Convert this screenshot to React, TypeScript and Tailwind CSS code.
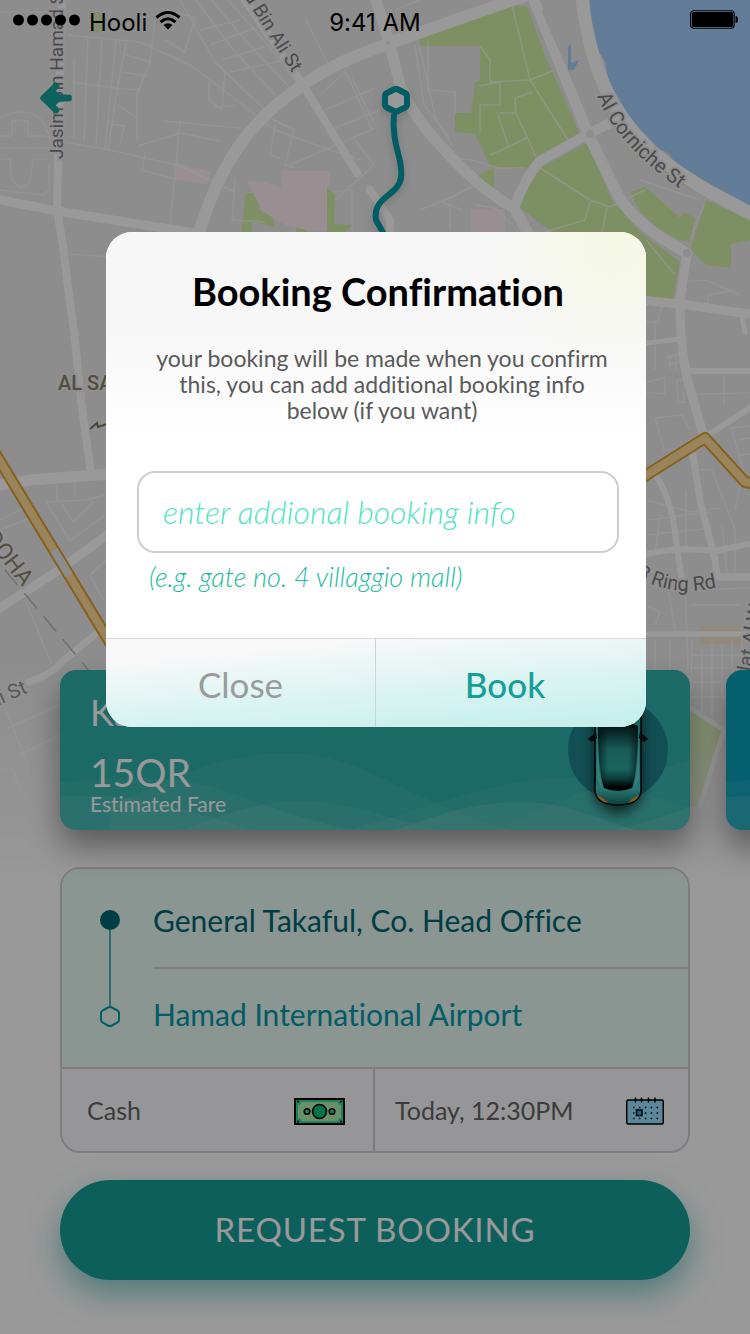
import React from "react";

const thinStreets = [
  "M0 12 H70", "M0 148 H50", "M12 136 V121 H28 V136 H45 M0 136 H12",
  "M0 159 H10 L12 180 L21 188 L30 182 L33 159 H48",
  "M0 118 Q20 108 36 115 Q46 122 50 140", "M0 190 L43 195 L49 190 V165",
  "M68 35 L140 42 L190 65 L230 95 L275 130 L330 150 L362 160",
  "M72 82 L115 88 L140 90", "M74 60 V140", "M88 36 L84 142", "M102 38 L96 146", "M116 40 L105 150",
  "M126 44 L118 84 L108 150", "M155 20 L150 62 L137 95 V140", "M126 55 L150 62 M122 72 L147 76 M118 105 L136 117",
  "M65 142 L110 150 L180 166 L235 192", "M110 124 L124 126 L120 145", "M138 146 L180 133 L220 141",
  "M180 120 L176 165 L170 226", "M163 121 L240 128", "M145 155 L142 170 L178 180", "M235 178 L232 220 L265 222",
  "M165 40 L185 52 L195 18 L160 8", "M180 0 L215 62 L265 110", "M196 0 L232 48 L275 95", "M212 0 L245 40 L290 88",
  "M228 0 L262 38 L298 84", "M200 30 L240 20 M210 45 L255 28 M222 60 L270 45 M230 72 L285 60",
  "M209 82 V100 L222 110 L225 70 M215 107 L235 106", "M270 118 L294 130 L285 165 L295 168",
  "M275 125 L270 155 L280 158", "M306 20 L328 64", "M345 70 L372 130", "M352 78 L375 125",
  "M325 110 L375 88 M335 128 L380 110 M320 95 L345 72", "M290 165 L375 128", "M333 192 L352 190 V230",
  "M355 140 L374 165 L335 200", "M70 254 L110 257", "M57 485 V500 M75 480 V497",
  "M46 502 L86 500 L106 495 M46 502 L70 541 L106 514 M62 504 L73 522 L94 502",
  "M0 520 L30 505 M0 530 L38 515", "M106 560 L90 575 L106 605", "M25 600 L52 665",
  "M0 695 L28 765 M8 728 L60 705 M20 755 L60 735", "M0 770 L12 768 L20 790",
  "M512 5 L530 80 L568 140", "M428 40 V90 L455 92 V115", "M415 45 L424 105 L450 138", "M420 48 L436 120 L452 145",
  "M480 46 L490 60 V82 L530 80 L555 70", "M479 86 L500 82 V105 H480 V133", "M500 113 H516 L515 98 L533 92",
  "M498 115 L508 145 M490 155 L527 138 M516 113 L536 157", "M455 158 L472 160 L498 168 H525",
  "M420 210 L450 198 L475 185 M450 204 V230 M442 202 L462 210", "M475 205 L495 208 L512 225",
  "M540 168 L590 200 L610 207 L645 190 M590 202 L585 220 L545 232", "M607 207 L602 232",
  "M465 0 L520 -5 M395 10 L420 0", "M640 180 L700 200 M704 205 L690 240", "M646 240 L675 275",
  "M682 282 L706 280 L740 295 M708 305 V295 L735 290", "M646 322 L658 322 L662 305 M655 320 V370",
  "M646 382 L665 378 V394 L646 392", "M666 357 L680 355 M668 364 L682 362 M670 355 V370 M676 353 V372",
  "M677 380 H684 V402 H678 Z", "M724 375 V406 M700 394 L750 393", "M655 418 L682 415 L690 430 M655 418 L664 450 L695 445",
  "M732 430 L743 470 L735 510 M730 428 L750 426 M738 440 L750 438 M740 455 L750 454",
  "M646 500 L690 512 L720 508 M648 520 L710 512 M646 535 L712 528", "M660 515 L655 555 M686 490 V550",
  "M700 470 H712 L735 530 V580", "M722 525 L728 580 M646 570 L666 575 L675 630",
  "M655 585 L675 590 M646 605 L660 612 L655 625 M685 575 L688 670", "M690 590 L750 588 M690 605 H740",
  "M655 640 V670 M670 640 V670 M692 640 L690 720", "M702 650 V715 M712 645 V720 M722 645 V705 M732 640 V700 M742 640 V720",
  "M690 655 H745 M690 668 H745 M690 682 H740 M690 697 H735 M694 710 L724 732",
];

const roads: [string, number][] = [
  ["M62 0 L58 155 L57 210 L62 240 L75 340 L81 400 L91 474", 8],
  ["M0 200 L57 211 L150 226 L200 234", 9],
  ["M245 0 L303 85 L357 173", 8],
  ["M530 -6 L390 43 C350 58 330 66 303 85 C250 120 218 165 197 240", 12],
  ["M376 0 L390 45 L400 85 Q412 115 440 145 Q480 190 514 208 L532 240", 11],
  ["M534 0 L588 134 L618 195 Q635 225 687 253", 11],
  ["M582 0 C590 60 605 105 650 150 C685 180 715 195 752 214", 13],
  ["M612 122 L588 134 L540 161 Q525 178 514 208", 10],
  ["M370 190 L390 220 V240", 8],
  ["M640 300 L680 304 L750 314", 9],
  ["M687 253 L680 300 Q680 360 692 395 L703 434", 9],
  ["M646 343 L680 339", 5], ["M690 371 H750", 6], ["M742 316 L745 332", 5], ["M705 437 L750 408", 6],
  ["M693 455 L700 500 L715 560 L717 577 H750", 7],
  ["M656 476 Q672 500 676 540 L682 582", 6],
  ["M640 556 Q670 546 715 551 L750 544", 6], ["M640 634 H750", 5],
  ["M0 485 L30 480 L110 474", 11],
  ["M0 608 L62 568 L110 533", 9],
  ["M28 682 Q50 676 62 662 L98 632", 7],
  ["M690 708 L724 730 L700 805", 5],
];

function StreetMap() {
  return (
    <svg aria-hidden="true" viewBox="0 0 750 1334" preserveAspectRatio="xMidYMin slice" className="absolute inset-0 h-full w-full">
      <defs>
        <linearGradient id="map-fade" x1="0" y1="0" x2="0" y2="1">
          <stop offset="0" stopColor="#fff" stopOpacity="0" />
          <stop offset="0.5" stopColor="#fff" stopOpacity="0.45" />
          <stop offset="1" stopColor="#fff" />
        </linearGradient>
        <path id="ring-rd" d="M632 573 Q672 602 728 584" />
        <path id="corniche" d="M597 96 C612 132 640 162 690 196" />
      </defs>
      <rect width="750" height="900" fill="#ebebeb" />
      <path fill="#ddd8cc" d="M580 0H600L610 100 700 185 750 212V200L590 0Z" />
      <path fill="#a5d0ff" d="M590 0 Q590 45 601 55 L605 62 Q610 98 638 130 L643 132 L660 150 L670 153 L673 162 L700 178 L750 206 V0 Z" />
      <g fill="#d2f1a5">
        <path d="M418 37 L505 5 L527 6 L545 55 L580 134 L535 160 L525 170 L490 166 L475 134 L455 132 V113 H471 L475 83 L480 80 V46 H421 Z" />
        <path d="M516 205 L532 172 L587 143 L612 200 L640 232 L680 262 L673 300 L640 297 Z" />
        <path d="M474 178 L494 167 V192 Z" />
        <path d="M630 192 L645 187 L676 214 L680 218 L683 212 L695 218 L690 242 L680 240 L660 230 L640 212 Z" />
        <path d="M706 200 L750 220 V240 L731 244 V268 L706 265 L690 250 Z" />
        <path d="M650 155 L680 172 L700 192 L672 180 Z" />
        <path d="M246 193 H259 V210 L272 217 L275 227 L252 222 V240 H240 Z" />
        <path d="M327 188 L335 194 L334 224 L353 225 L340 236 H327 Z M296 224 L307 226 V234 H296 Z" />
        <path d="M690 710 L724 730 L700 805 L688 808 Z" />
        <path opacity="0.7" d="M91 12 H102 V32 H91 Z" />
      </g>
      <g fill="#ffeef5">
        <path d="M281 171 H330 V185 H327 V230 H307 L285 225 L262 210 L247 181 L265 182 L281 188 Z" />
        <path d="M177 163 L211 172 L207 185 L175 179Z" />
        <path d="M471 209 H505 V240 H471 Z" />
      </g>
      <path fill="#fbdfb9" opacity="0.6" d="M700 626 H743 V644 H700 Z" />
      <path d={thinStreets.join(" ")} fill="none" stroke="#fff" strokeOpacity="0.6" strokeWidth="1.5" />
      <g fill="none" stroke="#fff" strokeLinecap="round" strokeLinejoin="round">
        {roads.map(([d, w]) => <path key={d} d={d} strokeWidth={w} />)}
      </g>
      <g fill="#ebebeb">
        <circle cx="388" cy="43" r="2" /><circle cx="590" cy="134" r="4" /><circle cx="687" cy="253" r="4" />
        <path d="M542 12 Q545 2 555 2 H568 Q577 6 579 22 Q586 70 606 118 L592 125 Z" />
      </g>
      <path fill="#a5d0ff" d="M568 47 L571 43 V63 L579 60 L574 70 H568 Z" />
      <g fill="none" strokeLinejoin="round">
        <path d="M-5 453 L112 646 M640 479 L705 438 L745 482 L756 484" stroke="#e0a030" strokeWidth="12" />
        <path d="M-5 453 L112 646 M640 479 L705 438 L745 482 L756 484" stroke="#ffdc98" strokeWidth="8" />
        <path d="M54 550 L69 575" stroke="#ebebeb" strokeWidth="8" />
        <path d="M5 570 L90 672" stroke="#b8b8b8" strokeWidth="1.5" strokeDasharray="20 10" />
      </g>
      <g className="font-['Roboto',sans-serif]" fill="#7c7c7c" stroke="#efefef" strokeWidth="4" paintOrder="stroke" fontSize="19">
        <text transform="translate(63 159) rotate(-90)">Jasim Bin Hamad St</text>
        <text transform="translate(244 -4) rotate(58)">d Bin Ali St</text>
        <text fontSize="20"><textPath href="#corniche">Al Corniche St</textPath></text>
        <text fontSize="20"><textPath href="#ring-rd">&#39;B Ring Rd</textPath></text>
        <text transform="translate(-14 711) rotate(-24)" fontSize="20">Ali St</text>
        <text transform="translate(751 672) rotate(-80)" fontSize="20">lat Al Wadi</text>
        <g fill="#8b826a">
          <text x="58" y="390" fontSize="20" fontWeight="500">AL SADD</text>
          <text transform="translate(-16 538) rotate(52)" fontSize="23">DOHA</text>
        </g>
      </g>
      <path d="M90 429 L97 423 L98 427 L110 423" stroke="#7d745e" strokeWidth="2" fill="none" />
      <g fill="none" stroke="#009baa" strokeWidth="6" className="drop-shadow-lg">
        <path d="M394 114 C391 145 404 160 401 178 C398 196 372 197 376 220 L386 238" />
        <path fill="#fff" strokeLinejoin="round" d="M394 89.500 Q396 88.500 398 89.500 L405 93 Q407 94 407 96 V104.500 Q407 106.500 405 107.500 L398 111 Q396 112 394 111 L387 107.500 Q385 106.500 385 104.500 V96 Q385 94 387 93 Z" />
      </g>
      <rect y="640" width="750" height="260" fill="url(#map-fade)" />
      <rect y="899" width="750" height="435" fill="#fff" />
    </svg>
  );
}

function StatusBar() {
  return (
    <div className="relative z-30 grid h-10 grid-cols-3 items-center px-3 font-['Inter',sans-serif] text-2xl text-black">
      <div className="flex items-center gap-2">
        <svg aria-hidden="true" width="69" height="12" viewBox="0 0 69 12">
          {[6, 20, 34, 48, 62].map((x) => <circle key={x} cx={x + 0.5} cy="6" r="5.5" />)}
        </svg>
        <span className="pt-1.5">Hooli</span>
        <svg aria-hidden="true" width="26" height="19" viewBox="0 0 26 19" fill="none" stroke="#000" strokeWidth="3">
          <path d="M1.500 6.500 Q13 -3.500 24.500 6.500" />
          <path d="M5.500 11 Q13 4.500 20.500 11" />
          <path d="M8.500 14 Q13 10.500 17.500 14 L13 18.500 Z" fill="#000" stroke="none" />
        </svg>
      </div>
      <span className="pt-1.5 text-center">9:41 AM</span>
      <svg aria-label="Battery full" className="justify-self-end" width="49" height="20" viewBox="0 0 49 20">
        <rect x="1.600" y="0.750" width="43.500" height="17.500" rx="3" fill="none" stroke="#000" strokeWidth="1.200" />
        <rect x="3" y="2" width="41" height="15" rx="1.500" />
        <path d="M46.500 6 Q49 6 49 9.500 Q49 13 46.500 13 Z" />
      </svg>
    </div>
  );
}

function Waves() {
  return (
    <svg aria-hidden="true" viewBox="0 0 630 160" preserveAspectRatio="xMinYMax slice" className="absolute inset-0 h-full w-full" fill="#fff">
      <path opacity="0.060" d="M50 135 C110 110 160 83 227 83 C300 83 345 130 450 160 H50 Z" />
      <path opacity="0.070" d="M0 112 C90 104 130 108 170 123 C220 140 250 152 294 160 H0Z" />
      <path opacity="0.080" d="M0 127 C60 122 110 135 135 143 L194 160 H0Z" />
      <path opacity="0.080" d="M120 160 C165 146 195 131 241 131 C285 131 315 145 352 153 L380 160 H120Z" />
      <path opacity="0.060" d="M290 160 C390 130 440 108 514 108 C560 108 595 130 630 137 V160 H290Z" />
      <path opacity="0.100" d="M335 160 C380 145 410 132 461 132 C505 132 540 150 575 160 H335Z" />
      <path opacity="0.060" d="M440 160 C520 115 580 107 630 90 V160 H440Z" />
      <path opacity="0.080" d="M555 160 Q595 150 630 137 V160 H555Z" />
    </svg>
  );
}

function Car() {
  return (
    <svg aria-hidden="true" width="100" height="160" viewBox="0 0 100 160" className="absolute top-0 right-[22px]">
      <defs>
        <linearGradient id="car-glass" x1="0" y1="0" x2="0" y2="1">
          <stop offset="0" stopColor="#001010" /><stop offset="0.120" stopColor="#0a3a38" />
          <stop offset="0.400" stopColor="#2a9a94" />
          <stop offset="0.680" stopColor="#2ca7a1" /><stop offset="0.820" stopColor="#166662" /><stop offset="0.950" stopColor="#000" />
        </linearGradient>
        <linearGradient id="car-side" x1="0" y1="0" x2="1" y2="0">
          <stop offset="0" stopColor="#001414" stopOpacity="0.600" /><stop offset="0.250" stopColor="#001414" stopOpacity="0" />
          <stop offset="0.750" stopColor="#001414" stopOpacity="0" /><stop offset="1" stopColor="#001414" stopOpacity="0.600" />
        </linearGradient>
        <linearGradient id="car-body" x1="0" y1="0" x2="0" y2="1">
          <stop offset="0" stopColor="#2b9893" /><stop offset="0.850" stopColor="#40c4bb" /><stop offset="1" stopColor="#146662" />
        </linearGradient>
        <filter id="car-blur" x="-50%" y="-50%" width="200%" height="200%"><feGaussianBlur stdDeviation="6" /></filter>
      </defs>
      <circle cx="50" cy="80" r="50" fill="#1e838a" />
      <path d="M26 40 H74 V128 Q50 160 26 128 Z" opacity="0.600" filter="url(#car-blur)" />
      <path d="M27 40 Q50 20 73 40 V118 Q74 135 50 135 Q26 135 27 118 Z" fill="url(#car-body)" stroke="#000" strokeWidth="1.500" />
      <path d="M30 56 Q50 48 70 56 Q70 100 64 118 Q50 124 36 118 Q30 100 30 56 Z" fill="url(#car-glass)" />
      <path d="M30 56 Q50 48 70 56 Q70 100 64 118 Q50 124 36 118 Q30 100 30 56 Z" fill="url(#car-side)" />
      <path d="M29 58 V108 L34 119 Q30 100 29 58 Z M71 58 V108 L66 119 Q70 100 71 58 Z" fill="#8ee5df" opacity="0.500" />
      <path d="M29 125 Q31 131 40 133 L36 129 Z M71 125 Q69 131 60 133 L64 129 Z" fill="#ef9a16" />
      <path d="M28 63 L21 69 L24 71 L29 67 M72 63 L79 69 L76 71 L71 67" fill="#111" stroke="#111" strokeWidth="1.500" />
    </svg>
  );
}

function CashIcon() {
  return (
    <svg aria-hidden="true" width="51" height="27" viewBox="0 0 51 27" stroke="#000">
      <rect x="1" y="1" width="49" height="25" fill="#28dd9d" strokeWidth="2" />
      <path d="M7 4 H44 Q44 7 47 7 V20 Q44 20 44 23 H7 Q7 20 4 20 V7 Q7 7 7 4Z" fill="#b2eead" stroke="none" />
      <circle cx="25.500" cy="13.500" r="7" fill="#00be75" strokeWidth="1.500" />
      <circle cx="13" cy="13.500" r="2.800" fill="#28dd9d" strokeWidth="1.500" /><circle cx="38" cy="13.500" r="2.800" fill="#28dd9d" strokeWidth="1.500" />
      <path d="M3 3.500h2M46 3.500h2M3 23.500h2M46 23.500h2" strokeWidth="1.500" />
    </svg>
  );
}

function CalendarIcon() {
  return (
    <svg aria-hidden="true" width="38" height="28" viewBox="0 0 38 28" fill="none" stroke="#000">
      <rect x="0.750" y="3" width="36.500" height="24" rx="1.500" fill="#96e1ff" strokeWidth="1.500" />
      <path d="M9.500 0.500v5M15.500 0.500v5M22.500 0.500v5M29 0.500v5" strokeWidth="1.500" />
      <path d="M7 10.500h26M7 16h26M7 21.500h26" strokeWidth="1.500" strokeDasharray="1.500 4.400" />
      <rect x="10.500" y="13" width="5.500" height="5.500" fill="#16b4f5" strokeWidth="1.500" />
    </svg>
  );
}

export default function App() {
  return (
    <div className="relative flex min-h-screen flex-col overflow-hidden bg-white font-['Lato',sans-serif] [font-variant-ligatures:none]">
      <StreetMap />
      <StatusBar />
      <nav className="relative px-10 pt-[42px]">
        <button type="button" aria-label="Back" className="block">
          <svg width="32" height="32" viewBox="0 0 32 32" fill="#16a39e" stroke="#16a39e" strokeLinecap="round" strokeLinejoin="round">
            <path d="M16 4 L3.500 16 L16 28" fill="none" strokeWidth="6.500" />
            <path d="M6 16 L14 8 Q16 13.500 20 14 L30 14.500 V17.500 L20 18 Q16 18.500 14 24 Z" strokeWidth="3.500" />
          </svg>
        </button>
      </nav>

      <main className="relative mt-auto flex flex-col px-15 pb-[54px]">
        <div className="flex gap-9">
          <article className="relative h-40 w-full shrink-0 rounded-2xl bg-[#2db1aa] px-[30px] py-[22px] text-white shadow-[0_16px_32px_rgba(0,0,0,0.4)]">
            <div className="absolute inset-0 overflow-hidden rounded-2xl">
              <Waves />
              <Car />
            </div>
            <div className="relative flex flex-col">
              <h2 className="text-4xl leading-10">Karwa</h2>
              <p className="mt-5 text-[39px] leading-10">15QR</p>
              <p className="text-[21px] leading-6">Estimated Fare</p>
            </div>
          </article>
          <article aria-label="Next ride option" className="relative h-40 w-full shrink-0 overflow-hidden rounded-2xl bg-[#07a0b8] shadow-[0_16px_32px_rgba(0,0,0,0.4)]">
            <Waves />
          </article>
        </div>

        <section className="mt-[37px] overflow-hidden rounded-[20px] border-2 border-[#d1d1d4] bg-[#fafafd]">
          <div className="grid grid-cols-[91px_1fr] border-b-2 border-[#d1d1d4] bg-[#e8f8f3]">
            <svg aria-hidden="true" className="row-span-2" width="91" height="198" viewBox="0 0 91 198" fill="none">
              <path d="M48 61 V137" stroke="#4cb3b5" strokeWidth="2" />
              <circle cx="48" cy="51" r="10" fill="#006673" />
              <path d="M46 138.500 Q48 137.500 50 138.500 L55.500 141.500 Q57 142.500 57 144 V151 Q57 152.500 55.500 153.500 L50 156.500 Q48 157.500 46 156.500 L40.500 153.500 Q39 152.500 39 151 V144 Q39 142.500 40.500 141.500 Z" stroke="#009baa" strokeWidth="2" />
            </svg>
            <div className="flex h-[100px] items-center border-b-2 border-[#d1d1d4] pt-1 text-[30px] text-[#006673]">General Takaful, Co. Head Office</div>
            <div className="flex h-[98px] items-center pb-2 text-[30px] text-[#009baa]">Hamad International Airport</div>
          </div>
          <div className="grid grid-cols-2 text-[25px] text-[#646464]">
            <button type="button" className="flex h-[82px] items-center justify-between border-r-2 border-[#d1d1d4] pt-0.5 pr-7 pl-[25px]">
              <span>Cash</span>
              <CashIcon />
            </button>
            <button type="button" className="flex h-[82px] items-center justify-between pt-0.5 pr-6 pl-5">
              <span>Today, 12:30PM</span>
              <CalendarIcon />
            </button>
          </div>
        </section>

        <button type="button" className="mt-[27px] h-[100px] rounded-full bg-[#169e99] text-[33px] tracking-wide text-white shadow-[0_14px_30px_rgba(22,158,153,0.5)]">
          REQUEST BOOKING
        </button>
      </main>

      <div className="absolute inset-0 z-20 flex items-start justify-center bg-black/40 pt-58 pr-6 pl-[26px]">
        <div role="dialog" aria-modal="true" aria-labelledby="dialog-title" className="w-full max-w-[540px] overflow-hidden rounded-[26px] bg-white">
          <div className="bg-[radial-gradient(circle_at_94%_4%,#f5f8e4_0,#f5f8e400_120px),linear-gradient(#f7f7f7_0,#f7f7f7_100px,#ffffff_210px)] pt-[35px] pr-[27px] pb-[45px] pl-[31px]">
            <h1 id="dialog-title" className="text-center text-[38px] leading-12 font-bold text-black">Booking Confirmation</h1>
            <p className="mt-[30px] pl-2 text-center text-[23px] leading-[26px] whitespace-nowrap text-[#5a5a5a]">
              your booking will be made when you confirm<br />
              this, you can add additional booking info<br />
              below (if you want)
            </p>
            <input
              type="text"
              aria-label="Additional booking info"
              aria-describedby="info-hint"
              placeholder="enter addional booking info"
              className="mt-12 block h-[82px] w-full rounded-[18px] border-2 border-[#cfcfd1] bg-white px-6 pb-0.5 text-[32px] font-light text-[#16a39e] italic placeholder:text-[#50e3c2] placeholder:opacity-100"
            />
            <p id="info-hint" className="mt-2 pl-3 text-[27px] leading-8 font-light text-[#1abc9c] italic">(e.g. gate no. 4 villaggio mall)</p>
          </div>
          <div className="grid grid-cols-2 border-t border-[#d8d8d8] bg-[linear-gradient(175deg,#f8f8f8_18%,#d8f4f2_60%,#c4eeeb_100%)] text-[35px]">
            <button type="button" className="h-22 border-r border-[#c8d6d5] pt-0.5 text-[#9b9b9b]">Close</button>
            <button type="button" className="h-22 pt-0.5 pr-3 font-medium text-[#169e99]">Book</button>
          </div>
        </div>
      </div>
    </div>
  );
}
